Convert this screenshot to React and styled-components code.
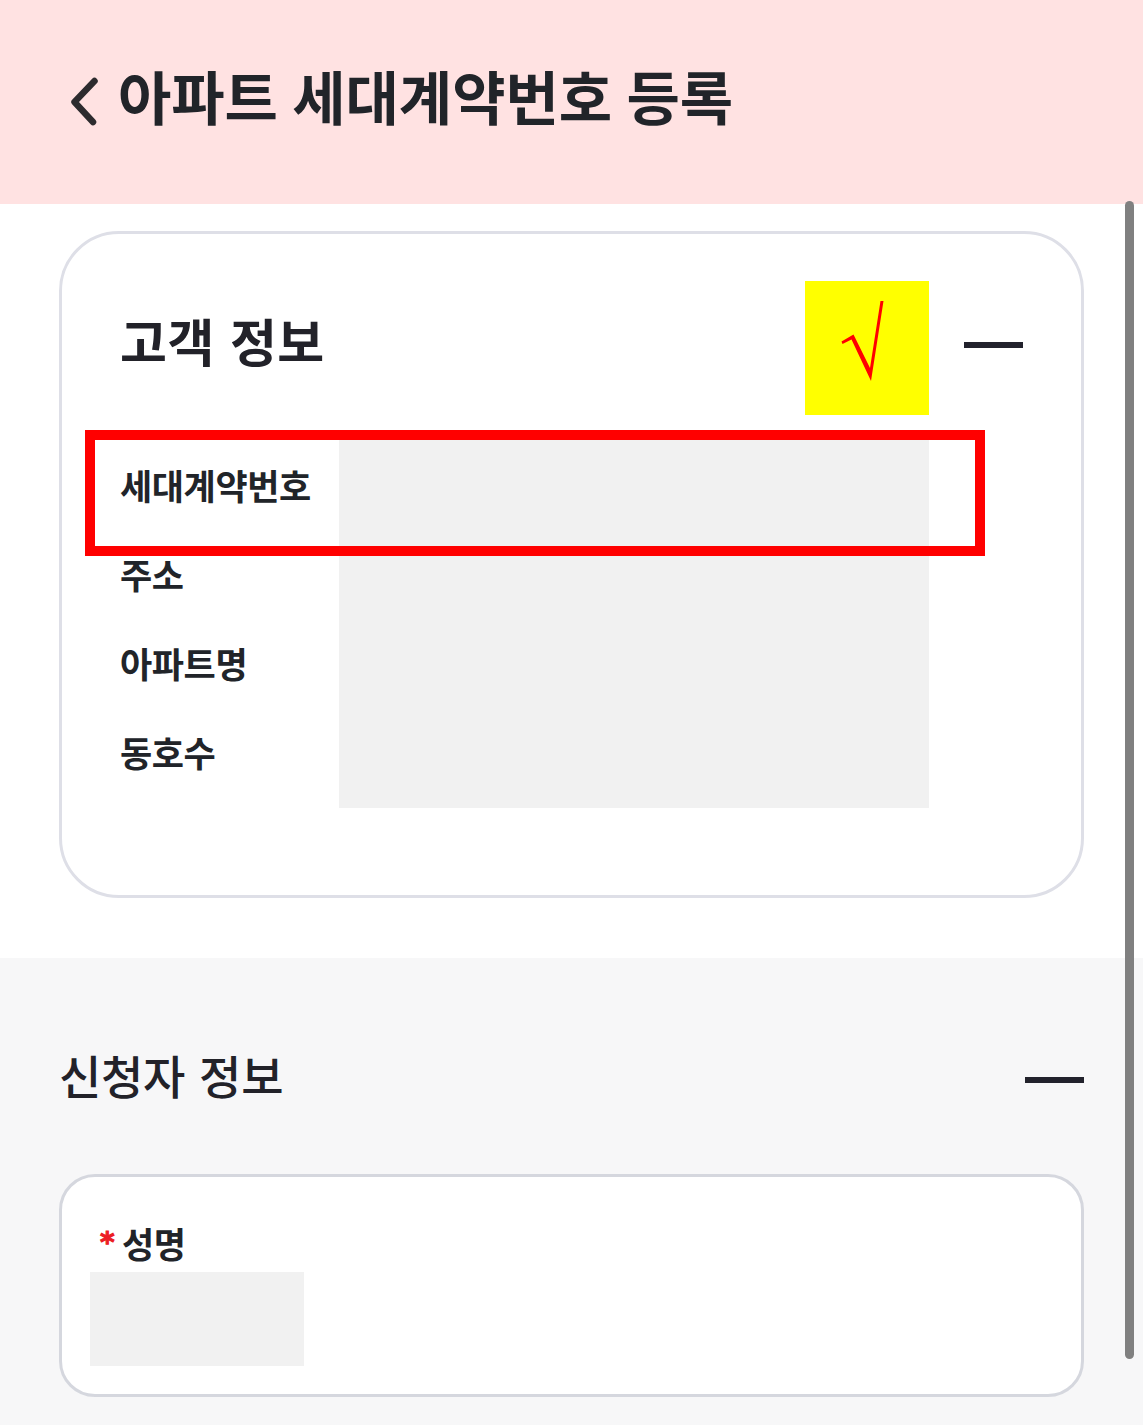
import React from "react";
import styled, { createGlobalStyle } from "styled-components";

const GlobalStyle = createGlobalStyle`
  * {
    box-sizing: border-box;
  }

  body {
    margin: 0;
    background: #ffffff;
    color: #212429;
    font-family: "Noto Sans CJK KR", sans-serif;
    overflow: hidden;
  }
`;

const Page = styled.div`
  position: relative;
  display: flex;
  flex-direction: column;
  height: 1425px;
  overflow: hidden;
`;

const Header = styled.header`
  display: flex;
  align-items: flex-start;
  gap: 20px;
  height: 204px;
  flex-shrink: 0;
  padding: 55px 0 0 70px;
  background: #ffe2e2;
`;

const BackIcon = styled.svg`
  width: 28px;
  height: 50px;
  margin-top: 22px;
`;

const PageTitle = styled.h1`
  margin: 0;
  font-size: 58px;
  font-weight: 700;
  line-height: 80px;
  letter-spacing: -0.1px;
  word-spacing: 1.5px;
`;

const Section = styled.section`
  height: ${(props) => props.$height};
  flex-shrink: 0;
  padding: ${(props) => props.$padding};
  background: ${(props) => props.$background};
`;

const Card = styled.div`
  position: relative;
  height: ${(props) => props.$height};
  margin-top: ${(props) => props.$marginTop || 0};
  padding: ${(props) => props.$padding};
  border: 3px solid ${(props) => props.$border};
  border-radius: ${(props) => props.$radius};
  background: #ffffff;
`;

const TitleRow = styled.div`
  display: flex;
  align-items: center;
  justify-content: space-between;
  height: 80px;
`;

const CardTitle = styled.h2`
  margin: 0;
  padding-bottom: 10px;
  font-size: 51px;
  font-weight: 700;
  line-height: 70px;
  letter-spacing: 0.5px;
  word-spacing: 3px;
  color: #222229;
`;

const SectionTitle = styled.h2`
  margin: 0;
  padding-bottom: 12px;
  font-size: 46px;
  font-weight: 500;
  line-height: 68px;
  letter-spacing: -0.3px;
  word-spacing: 4px;
  color: #222229;
`;

const Minus = styled.span`
  width: 59px;
  height: 6px;
  background: #22222c;
`;

const Details = styled.div`
  display: grid;
  grid-template-columns: 219px 590px;
  margin-top: 55px;
`;

const Labels = styled.div`
  display: flex;
  flex-direction: column;
`;

const Label = styled.span`
  font-size: 35px;
  font-weight: 700;
  line-height: 89px;
  letter-spacing: -0.4px;
`;

const Mask = styled.div`
  width: ${(props) => props.$width};
  height: ${(props) => props.$height};
  background: #f1f1f1;
`;

const CheckBadge = styled.div`
  position: absolute;
  top: 47px;
  left: 743px;
  display: flex;
  width: 124px;
  height: 134px;
  background: #ffff00;
`;

const Highlight = styled.div`
  position: absolute;
  top: 196px;
  left: 23px;
  width: 900px;
  height: 126px;
  border: 10px solid #ff0000;
`;

const FieldLabel = styled.div`
  display: flex;
  gap: 8px;
  height: 56px;
  padding-left: 10px;
  font-size: 35px;
  font-weight: 700;
  line-height: 54px;
  letter-spacing: -0.6px;
`;

const Required = styled.span`
  font-family: "DejaVu Sans", sans-serif;
  font-size: 28px;
  line-height: 54px;
  color: #ec1c24;
  -webkit-text-stroke: 1px #ec1c24;
`;

const Scrollbar = styled.div`
  position: absolute;
  top: 201px;
  right: 9px;
  width: 9px;
  height: 1158px;
  border-radius: 5px;
  background: #808080;
`;

const labels = ["세대계약번호", "주소", "아파트명", "동호수"];

const CustomerInfo = () => {
  return (
    <Section $height="754px" $padding="27px 59px 0" $background="#ffffff">
      <Card $height="667px" $padding="71px 58px 0 58px" $border="#dedfe7" $radius="60px">
        <TitleRow>
          <CardTitle>고객 정보</CardTitle>
          <Minus />
        </TitleRow>
        <Details>
          <Labels>
            {labels.map((label) => (
              <Label key={label}>{label}</Label>
            ))}
          </Labels>
          <Mask $width="590px" $height="368px" />
        </Details>
        <CheckBadge>
          <svg width="124" height="134" viewBox="0 0 124 134">
            <path
              d="M36.5 60.5L48.5 53.5L65 87L75.5 20H78.5L66 100L46.5 58.5L37.5 63Z"
              fill="#ff0000"
            />
          </svg>
        </CheckBadge>
        <Highlight />
      </Card>
    </Section>
  );
};

const ApplicantInfo = () => {
  return (
    <Section $height="467px" $padding="82px 59px 0" $background="#f7f7f8">
      <TitleRow>
        <SectionTitle>신청자 정보</SectionTitle>
        <Minus />
      </TitleRow>
      <Card
        $height="223px"
        $marginTop="54px"
        $padding="39px 28px 0"
        $border="#d5d7de"
        $radius="36px"
      >
        <FieldLabel>
          <Required>*</Required>
          성명
        </FieldLabel>
        <Mask $width="214px" $height="94px" />
      </Card>
    </Section>
  );
};

const App = () => {
  return (
    <Page>
      <GlobalStyle />
      <Header>
        <BackIcon viewBox="0 0 28 50" fill="none">
          <path
            d="M24.5 4L4.5 25L23 45"
            stroke="#2d2b2e"
            strokeWidth="6.5"
            strokeLinecap="round"
            strokeLinejoin="round"
          />
        </BackIcon>
        <PageTitle>아파트 세대계약번호 등록</PageTitle>
      </Header>
      <CustomerInfo />
      <ApplicantInfo />
      <Scrollbar />
    </Page>
  );
};

export default App;
